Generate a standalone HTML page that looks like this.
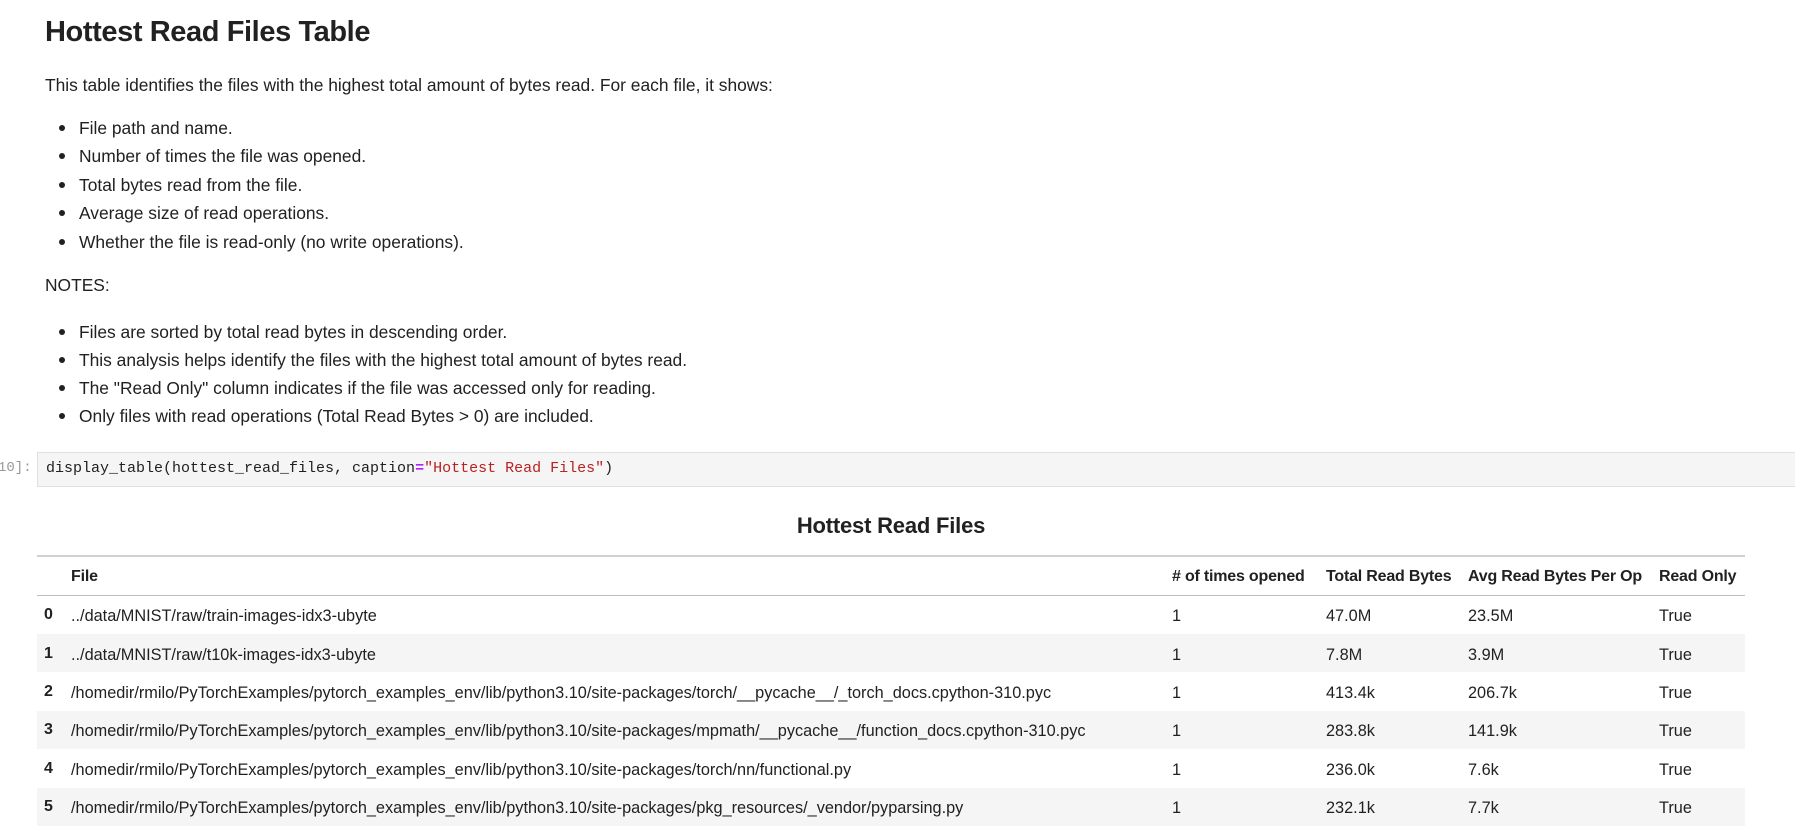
<!DOCTYPE html>
<html><head><meta charset="utf-8"><style>
body{margin:0;width:1795px;height:837px;background:#fff;font-family:"Liberation Sans",sans-serif;color:#212121;position:relative;overflow:hidden}
.a{position:absolute;white-space:nowrap}
.t{font-size:17.4px;line-height:22px}
.d{font-size:16.3px;line-height:20px}
h1{position:absolute;left:45px;top:14px;margin:0;font-size:29px;letter-spacing:-0.4px;font-weight:bold;line-height:36px}
.dot{position:absolute;width:6px;height:6px;border-radius:50%;background:#212121}
.code{position:absolute;left:37px;top:452px;width:1760px;height:35px;background:#f5f5f5;border:1px solid #e0e0e0;box-sizing:border-box}
.code span.c{position:absolute;left:8px;top:7px;font-family:"Liberation Mono",monospace;font-size:15px;color:#212121}
.pr{position:absolute;left:-2px;top:460px;font-family:"Liberation Mono",monospace;font-size:14px;color:#999}
.row{position:absolute;left:37px;width:1708px;height:38px}
.row.g{background:#f5f5f5}
.h{font-weight:bold;font-size:16px;letter-spacing:-0.2px}
</style></head><body>
<h1>Hottest Read Files Table</h1>
<div class="a t" style="left:45px;top:74px">This table identifies the files with the highest total amount of bytes read. For each file, it shows:</div>
<div class="dot" style="left:59px;top:125px"></div><div class="a t" style="left:79px;top:117px">File path and name.</div>
<div class="dot" style="left:59px;top:153px"></div><div class="a t" style="left:79px;top:145px">Number of times the file was opened.</div>
<div class="dot" style="left:59px;top:182px"></div><div class="a t" style="left:79px;top:174px">Total bytes read from the file.</div>
<div class="dot" style="left:59px;top:210px"></div><div class="a t" style="left:79px;top:202px">Average size of read operations.</div>
<div class="dot" style="left:59px;top:239px"></div><div class="a t" style="left:79px;top:231px">Whether the file is read-only (no write operations).</div>
<div class="a t" style="left:45px;top:274px">NOTES:</div>
<div class="dot" style="left:59px;top:329px"></div><div class="a t" style="left:79px;top:321px">Files are sorted by total read bytes in descending order.</div>
<div class="dot" style="left:59px;top:357px"></div><div class="a t" style="left:79px;top:349px">This analysis helps identify the files with the highest total amount of bytes read.</div>
<div class="dot" style="left:59px;top:385px"></div><div class="a t" style="left:79px;top:377px">The "Read Only" column indicates if the file was accessed only for reading.</div>
<div class="dot" style="left:59px;top:413px"></div><div class="a t" style="left:79px;top:405px">Only files with read operations (Total Read Bytes &gt; 0) are included.</div>
<div class="pr">10]:</div>
<div class="code"><span class="c">display_table(hottest_read_files, caption<span style="color:#aa22ff;font-weight:bold">=</span><span style="color:#ba2121">"Hottest Read Files"</span>)</span></div>
<div class="a" style="left:37px;width:1708px;top:513px;text-align:center;font-weight:bold;font-size:22px;letter-spacing:-0.2px">Hottest Read Files</div>
<div class="a" style="left:37px;width:1708px;top:555px;height:2px;background:#d0d0d0"></div>
<div class="a h" style="left:71px;top:568px">File</div>
<div class="a h" style="left:1172px;top:568px"># of times opened</div>
<div class="a h" style="left:1326px;top:568px">Total Read Bytes</div>
<div class="a h" style="left:1468px;top:568px">Avg Read Bytes Per Op</div>
<div class="a h" style="left:1659px;top:568px">Read Only</div>
<div class="a" style="left:37px;width:1708px;top:595px;height:1px;background:#bdbdbd"></div>

<div class="row" style="top:596px"></div>
<div class="row g" style="top:634px"></div>
<div class="row" style="top:672px"></div>
<div class="row g" style="top:711px"></div>
<div class="row" style="top:749px"></div>
<div class="row g" style="top:788px"></div>

<div class="a h" style="left:44px;top:606px">0</div><div class="a d" style="left:71px;top:606px">../data/MNIST/raw/train-images-idx3-ubyte</div>
<div class="a d" style="left:1172px;top:606px">1</div><div class="a d" style="left:1326px;top:606px">47.0M</div><div class="a d" style="left:1468px;top:606px">23.5M</div><div class="a d" style="left:1659px;top:606px">True</div>

<div class="a h" style="left:44px;top:645px">1</div><div class="a d" style="left:71px;top:645px">../data/MNIST/raw/t10k-images-idx3-ubyte</div>
<div class="a d" style="left:1172px;top:645px">1</div><div class="a d" style="left:1326px;top:645px">7.8M</div><div class="a d" style="left:1468px;top:645px">3.9M</div><div class="a d" style="left:1659px;top:645px">True</div>

<div class="a h" style="left:44px;top:683px">2</div><div class="a d" style="left:71px;top:683px">/homedir/rmilo/PyTorchExamples/pytorch_examples_env/lib/python3.10/site-packages/torch/__pycache__/_torch_docs.cpython-310.pyc</div>
<div class="a d" style="left:1172px;top:683px">1</div><div class="a d" style="left:1326px;top:683px">413.4k</div><div class="a d" style="left:1468px;top:683px">206.7k</div><div class="a d" style="left:1659px;top:683px">True</div>

<div class="a h" style="left:44px;top:721px">3</div><div class="a d" style="left:71px;top:721px">/homedir/rmilo/PyTorchExamples/pytorch_examples_env/lib/python3.10/site-packages/mpmath/__pycache__/function_docs.cpython-310.pyc</div>
<div class="a d" style="left:1172px;top:721px">1</div><div class="a d" style="left:1326px;top:721px">283.8k</div><div class="a d" style="left:1468px;top:721px">141.9k</div><div class="a d" style="left:1659px;top:721px">True</div>

<div class="a h" style="left:44px;top:760px">4</div><div class="a d" style="left:71px;top:760px">/homedir/rmilo/PyTorchExamples/pytorch_examples_env/lib/python3.10/site-packages/torch/nn/functional.py</div>
<div class="a d" style="left:1172px;top:760px">1</div><div class="a d" style="left:1326px;top:760px">236.0k</div><div class="a d" style="left:1468px;top:760px">7.6k</div><div class="a d" style="left:1659px;top:760px">True</div>

<div class="a h" style="left:44px;top:798px">5</div><div class="a d" style="left:71px;top:798px">/homedir/rmilo/PyTorchExamples/pytorch_examples_env/lib/python3.10/site-packages/pkg_resources/_vendor/pyparsing.py</div>
<div class="a d" style="left:1172px;top:798px">1</div><div class="a d" style="left:1326px;top:798px">232.1k</div><div class="a d" style="left:1468px;top:798px">7.7k</div><div class="a d" style="left:1659px;top:798px">True</div>
</body></html>
